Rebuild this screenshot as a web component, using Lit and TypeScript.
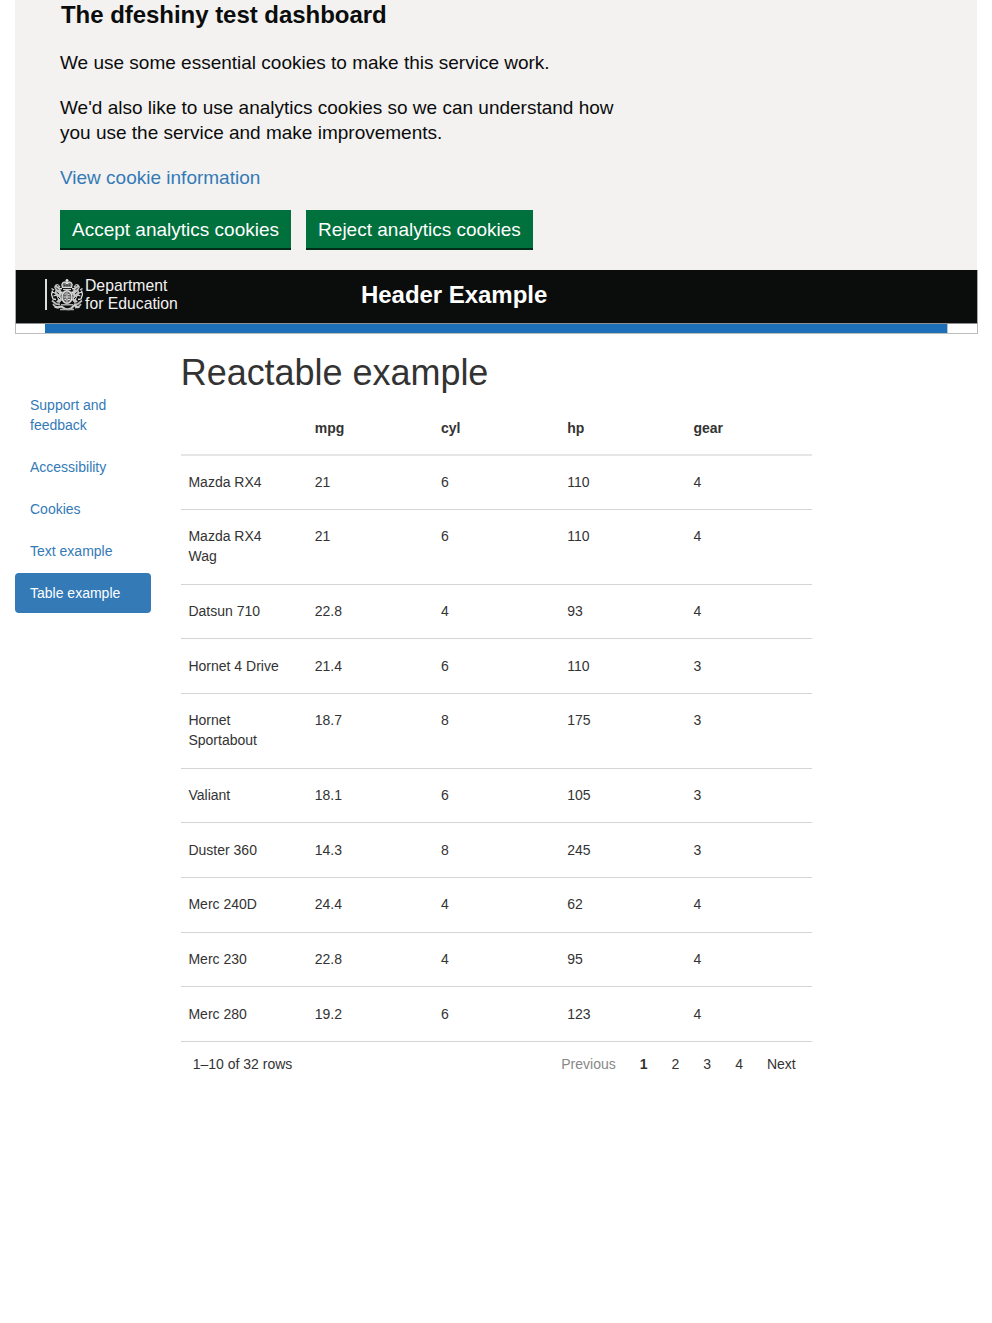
import { LitElement, html, css, svg } from "lit";
import { customElement, state } from "lit/decorators.js";
import { classMap } from "lit/directives/class-map.js";

const cars: [string, string, string, string, string][] = [
  ["Mazda RX4", "21", "6", "110", "4"],
  ["Mazda RX4 Wag", "21", "6", "110", "4"],
  ["Datsun 710", "22.8", "4", "93", "4"],
  ["Hornet 4 Drive", "21.4", "6", "110", "3"],
  ["Hornet Sportabout", "18.7", "8", "175", "3"],
  ["Valiant", "18.1", "6", "105", "3"],
  ["Duster 360", "14.3", "8", "245", "3"],
  ["Merc 240D", "24.4", "4", "62", "4"],
  ["Merc 230", "22.8", "4", "95", "4"],
  ["Merc 280", "19.2", "6", "123", "4"],
];

const base = css`
  * { box-sizing: border-box; }
  :host { display: block; font-family: "Liberation Sans", Arial, sans-serif; }
  a { color: #337ab7; text-decoration: none; }
  h1, h2, p, ul { margin: 0; padding: 0; font-weight: 400; }
`;

@customElement("cookie-banner")
class CookieBanner extends LitElement {
  static styles = [base, css`
    .banner { height: 270px; padding: 0 45px; background: #f3f2f1; color: #0b0c0c; font-size: 19px; line-height: 25px; }
    .title { font-size: 24px; font-weight: 700; line-height: 30px; padding-left: 1px; margin-bottom: 20px; letter-spacing: -0.04px; }
    .text { width: 580px; margin-bottom: 20px; }
    .buttons { display: flex; gap: 15px; }
    .button { height: 40px; padding: 1px 12px 0; border: 0; border-bottom: 2px solid #002d18; background: #00703c; color: #fff; font: 19px/19px "Liberation Sans", Arial, sans-serif; white-space: nowrap; }
    .accept { width: 231px; }
    .reject { width: 227px; }
  `];
  render() {
    return html`<section class="banner">
      <h2 class="title">The dfeshiny test dashboard</h2>
      <p class="text">We use some essential cookies to make this service work.</p>
      <p class="text">We'd also like to use analytics cookies so we can understand how you use the service and make improvements.</p>
      <p class="text"><a href="#">View cookie information</a></p>
      <div class="buttons">
        <button class="button accept">Accept analytics cookies</button>
        <button class="button reject">Reject analytics cookies</button>
      </div>
    </section>`;
  }
}

const supporter = svg`
  <path d="M3 8 4.500 5.500 7 5 9.500 7.500 8 9.500 10.500 12 11 15 9.500 17 11 21 8.500 24 5 23 7 20.500 5.500 17 3.500 14.500 4.500 11Z" fill="#c4c4c4"/>
  <path d="M.5 9.500 3 11M1 13 4 14M2.500 17 5.500 16M1.500 11.500 .5 15.500 2 20 5 20.500M8 10 11 9.500M9 14 12 13" fill="none" stroke="#ddd" stroke-width="1.300"/>
  <path d="M5 8.500 7.500 11M5.500 13 8 15M7 18 9 20M6 6.500 7.500 7" fill="none" stroke="#1c1c1c" stroke-width="1"/>
  <path d="M1 21.500 5 25 9 25.500M2 25 4.500 28 8 28.500" fill="none" stroke="#bbb" stroke-width="1.800"/>`;

@customElement("site-header")
class SiteHeader extends LitElement {
  static styles = [base, css`
    .bar { display: grid; grid-template-columns: 316px 1fr; height: 53px; background: #0b0c0c; color: #fff; border: solid #aaa; border-width: 0 1px; padding-left: 29px; }
    .logo { display: flex; height: 31px; margin-top: 9px; border-left: 2px solid #ddd; padding-left: 4px; }
    .crest { width: 32px; height: 32px; flex: none; }
    .name { margin: -2px 0 0 2px; font-size: 15.75px; line-height: 17.500px; color: #f2f2f2; white-space: nowrap; }
    .heading { font-size: 24px; font-weight: 700; line-height: 30px; margin-top: 10px; letter-spacing: -0.04px; }
    .strip { height: 11px; padding: 0 29px; border: 1px solid #bbb; border-top-color: #8a8f94; }
    .blue { height: 9px; background: #1d70b8; border-right: 1px solid #b5c4d2; }
  `];
  render() {
    return html`<header>
      <div class="bar">
        <div class="logo">
          <svg class="crest" viewBox="0 0 32 32" aria-hidden="true">
            <g>${supporter}</g>
            <g transform="translate(32 0) scale(-1 1)">${supporter}</g>
            <path d="M11.500 8.500 10.800 5.500 12 3.500 14 3 16 4.500 18 3 20 3.500 21.200 5.500 20.500 8.500Z" fill="#777" stroke="#ddd" stroke-width="1.200"/>
            <path d="M16 0V5M14.500 1.500H17.500" stroke="#eee" stroke-width="1.400"/>
            <path d="M13 5.500 14 7M16 5V7M19 5.500 18 7" stroke="#222" stroke-width=".9"/>
            <path d="M12 10.500H20" stroke="#ccc" stroke-width="1.200"/>
            <ellipse cx="16" cy="18" rx="5" ry="6.300" fill="#666" stroke="#ddd" stroke-width="1.500"/>
            <path d="M16 13V23M12.500 18H19.500" stroke="#ddd" stroke-width=".9"/>
            <path d="M13.500 15H15M17 15.500H18.500M13.500 20.500H15M17 20.500H19" stroke="#ddd"/>
            <path d="M4 27.500C8 30 9 26 12 28.500S20 31 22 27.500 26 30 28 27.500" fill="none" stroke="#ccc" stroke-width="2.200"/>
            <path d="M9 30.500H23M10 25.800H22" stroke="#aaa" stroke-width="1.500"/>
          </svg>
          <div class="name">Department<br>for Education</div>
        </div>
        <h1 class="heading">Header Example</h1>
      </div>
      <div class="strip"><div class="blue"></div></div>
    </header>`;
  }
}

@customElement("side-nav")
class SideNav extends LitElement {
  @state() private active = "Table example";
  static styles = [base, css`
    .nav { display: flex; flex-direction: column; gap: 2px; list-style: none; font-size: 14px; line-height: 20px; }
    .link { display: block; padding: 10px 15px; border-radius: 4px; }
    .active { background: #337ab7; color: #fff; }
  `];
  render() {
    return html`<ul class="nav">${["Support and feedback", "Accessibility", "Cookies", "Text example", "Table example"].map(
      (t) => html`<li><a href="#" class=${classMap({ link: true, active: t === this.active })} @click=${() => (this.active = t)}>${t}</a></li>`
    )}</ul>`;
  }
}

@customElement("car-table")
class CarTable extends LitElement {
  static styles = [base, css`
    :host { font-size: 14px; line-height: 20px; color: #333; }
    .row { display: grid; grid-template-columns: repeat(5, 126.27px); padding: 16.200px 0 17.480px; border-bottom: 1px solid #d2d4d6; }
    .head { font-weight: 700; padding: 17px 0 16px; border-bottom: 2px solid #e6e6e6; }
    .cell { padding: 0 7.750px; }
    .name { padding-right: 20px; }
    .footer { display: flex; justify-content: space-between; padding: 12px 4.300px 0 12px; }
    .pages { display: flex; }
    .page { padding: 0 12px; }
    .current { font-weight: 700; }
    .muted { color: #888; }
  `];
  render() {
    return html`
      <div class="row head">${["", "mpg", "cyl", "hp", "gear"].map((h) => html`<div class="cell">${h}</div>`)}</div>
      ${cars.map((r) => html`<div class="row">${r.map((c, i) => html`<div class=${classMap({ cell: true, name: i === 0 })}>${c}</div>`)}</div>`)}
      <div class="footer"><span>1–10 of 32 rows</span>
        <div class="pages"><span class="page muted">Previous</span><span class="page current">1</span><span class="page">2</span><span class="page">3</span><span class="page">4</span><span class="page">Next</span></div>
      </div>`;
  }
}

@customElement("app-root")
class AppRoot extends LitElement {
  static styles = [base, css`
    :host { min-height: 1323px; padding: 0 14px 0 15px; background: #fff; color: #333; }
    .banner { display: block; margin-right: 1px; }
    .body { display: grid; grid-template-columns: 136px 631.330px; column-gap: 29.700px; }
    .nav { margin-top: 51px; }
    .title { font-size: 36px; line-height: 40px; margin: 19px 0 7.500px; letter-spacing: -0.03px; }
  `];
  render() {
    return html`
      <cookie-banner class="banner"></cookie-banner>
      <site-header></site-header>
      <div class="body">
        <side-nav class="nav"></side-nav>
        <main><h1 class="title">Reactable example</h1><car-table></car-table></main>
      </div>`;
  }
}
